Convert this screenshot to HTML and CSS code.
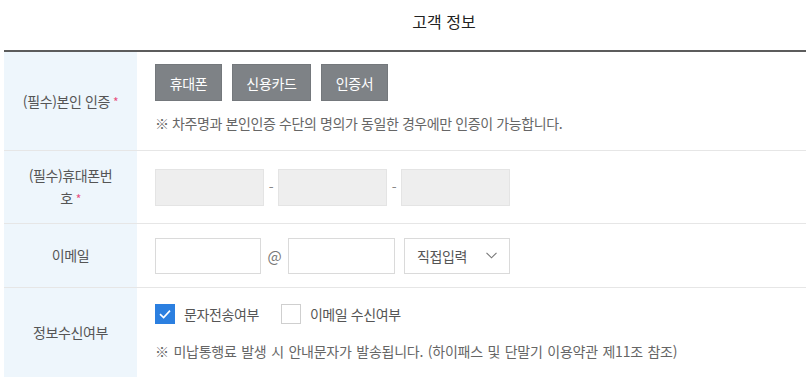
FILE: index.html
```html
<!DOCTYPE html>
<html lang="ko">
<head>
<meta charset="utf-8">
<title>고객 정보</title>
<link rel="stylesheet" href="styles.css">
</head>
<body>
<div class="wrap">
  <h2 class="title">고객 정보</h2>
  <div class="table">
    <div class="row row-auth">
      <div class="label"><span class="label-text">(필수)본인 인증<span class="req">*</span></span></div>
      <div class="cell">
        <div class="btns">
          <button class="btn w67" type="button">휴대폰</button>
          <button class="btn w79" type="button">신용카드</button>
          <button class="btn w67" type="button">인증서</button>
        </div>
        <p class="note">※ 차주명과 본인인증 수단의 명의가 동일한 경우에만 인증이 가능합니다.</p>
      </div>
    </div>
    <div class="row row-phone">
      <div class="label"><span class="label-text">(필수)휴대폰번<br>호<span class="req">*</span></span></div>
      <div class="cell">
        <div class="line">
          <input class="field field-gray" type="text" disabled>
          <span class="dash">-</span>
          <input class="field field-gray" type="text" disabled>
          <span class="dash">-</span>
          <input class="field field-gray" type="text" disabled>
        </div>
      </div>
    </div>
    <div class="row row-email">
      <div class="label"><span class="label-text">이메일</span></div>
      <div class="cell">
        <div class="line">
          <input class="field field-email" type="text">
          <span class="at">@</span>
          <input class="field field-email2" type="text">
          <div class="select">
            <span>직접입력</span>
            <svg class="chev" width="11" height="7" viewBox="0 0 11 7"><polyline points="0.5,0.8 5.5,5.8 10.5,0.8" fill="none" stroke="#777" stroke-width="1.1"/></svg>
          </div>
        </div>
      </div>
    </div>
    <div class="row row-info">
      <div class="label"><span class="label-text">정보수신여부</span></div>
      <div class="cell">
        <div class="checks">
          <label class="check">
            <span class="box box-on"><svg width="20" height="20" viewBox="0 0 20 20"><polyline points="5,10.2 8.6,13.6 15,6.6" fill="none" stroke="#fff" stroke-width="1.6"/></svg></span>
            <span class="check-text">문자전송여부</span>
          </label>
          <label class="check">
            <span class="box"></span>
            <span class="check-text">이메일 수신여부</span>
          </label>
        </div>
        <p class="note note-info">※ 미납통행료 발생 시 안내문자가 발송됩니다. (하이패스 및 단말기 이용약관 제11조 참조)</p>
      </div>
    </div>
  </div>
</div>
</body>
</html>
```

FILE: styles.css
```css
html, body {
  margin: 0;
  padding: 0;
  overflow: hidden;
  background: #fff;
}

body {
  font-family: "Noto Sans CJK KR", "Noto Sans", sans-serif;
  color: #555;
  font-size: 14px;
  letter-spacing: -0.4px;
}

.wrap {
  width: 802px;
  margin-left: 4px;
}

.title {
  margin: 0;
  height: 50px;
  box-sizing: border-box;
  padding-left: 78px;
  line-height: 42px;
  text-align: center;
  font-size: 16px;
  font-weight: 400;
  color: #222;
  letter-spacing: 0;
}

.table {
  border-top: 2px solid #5c5c5c;
}

.row {
  display: flex;
  border-bottom: 1px solid #e6e6e6;
}

.row-auth { height: 98px; }
.row-phone { height: 72px; }
.row-email { height: 63px; }
.row-info { height: 100px; border-bottom: 0; }

.label {
  width: 133px;
  flex: none;
  box-sizing: border-box;
  padding: 0 8px;
  background: #eef6fc;
  display: flex;
  align-items: center;
  justify-content: center;
  text-align: center;
  line-height: 23px;
  color: #555;
}

.row-info .label {
  align-items: flex-start;
  padding-top: 33px;
}

.req {
  color: #e8507e;
  margin-left: 3px;
  font-size: 12px;
}

.cell {
  flex: 1;
  padding-left: 18px;
  display: flex;
  flex-direction: column;
  justify-content: center;
}

.row-auth .cell {
  justify-content: flex-start;
  padding-top: 12px;
}

.row-info .cell {
  justify-content: flex-start;
  padding-top: 16px;
}

.btns {
  display: flex;
  gap: 10px;
}

.btn {
  height: 37px;
  box-sizing: border-box;
  border: 1px solid #74787c;
  background: #7e8286;
  color: #fff;
  font-family: inherit;
  font-size: 14px;
  letter-spacing: -0.3px;
  padding: 0;
  cursor: pointer;
}

.w67 { width: 67px; }
.w79 { width: 79px; }

.note {
  margin: 13px 0 0;
  line-height: 19px;
  color: #666;
}

.note-info {
  margin-top: 18px;
  word-spacing: 1px;
  letter-spacing: -0.25px;
}

.line {
  display: flex;
  align-items: center;
}

.field {
  box-sizing: border-box;
  height: 37px;
  margin: 0;
  padding: 0 10px;
  font-family: inherit;
  font-size: 14px;
  outline: none;
}

.field-gray {
  width: 109px;
  background: #eeeeee;
  border: 1px solid #e4e4e4;
}

.dash {
  width: 14px;
  text-align: center;
  color: #888;
}

.field-email {
  width: 106px;
  height: 36px;
  background: #fff;
  border: 1px solid #dadada;
}

.field-email2 {
  width: 107px;
  height: 36px;
  background: #fff;
  border: 1px solid #dadada;
}

.at {
  width: 27px;
  text-align: center;
  color: #777;
  font-size: 15px;
}

.select {
  width: 106px;
  height: 36px;
  box-sizing: border-box;
  margin-left: 9px;
  border: 1px solid #dadada;
  display: flex;
  align-items: center;
  justify-content: space-between;
  padding: 0 12px;
  color: #555;
}

.chev {
  display: block;
}

.checks {
  display: flex;
  align-items: center;
  gap: 22px;
}

.check {
  display: flex;
  align-items: center;
  gap: 9px;
  cursor: pointer;
}

.box {
  width: 20px;
  height: 20px;
  box-sizing: border-box;
  border: 1px solid #cfcfcf;
  background: #fff;
  display: block;
}

.box svg {
  display: block;
}

.box-on {
  border: 0;
  background: #2b7fe0;
}

.check-text {
  color: #555;
  line-height: 20px;
}
```
